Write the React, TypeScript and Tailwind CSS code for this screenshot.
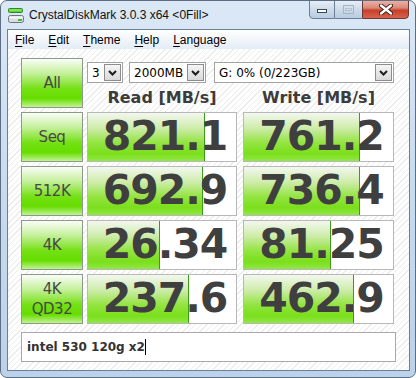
import React from 'react';

type Row = {
  label: string[];
  read: string;
  write: string;
  readBar: number;
  writeBar: number;
};

const ROWS: Row[] = [
  { label: ['Seq'], read: '821.1', write: '761.2', readBar: 117, writeBar: 116 },
  { label: ['512K'], read: '692.9', write: '736.4', readBar: 115, writeBar: 116 },
  { label: ['4K'], read: '26.34', write: '81.25', readBar: 72, writeBar: 87 },
  { label: ['4K', 'QD32'], read: '237.6', write: '462.9', readBar: 101, writeBar: 110 },
];

const MENU = ['File', 'Edit', 'Theme', 'Help', 'Language'];

const DriveIcon = () => (
  <svg width="17" height="17" viewBox="0 0 17 17">
    <rect x="0.5" y="1.5" width="14" height="4" rx="1" fill="#5fd03a" stroke="#2f8a1e" />
    <rect x="1.5" y="2.5" width="12" height="1" fill="#a8f08a" />
    <rect x="0.5" y="8.5" width="15" height="7" rx="2" fill="#d8dde2" stroke="#6d747c" />
    <rect x="1.5" y="9.5" width="13" height="2" fill="#f4f6f8" />
    <rect x="10" y="12" width="4" height="2" fill="#3fbf2a" />
  </svg>
);

const Chevron = () => (
  <svg width="9" height="6" viewBox="0 0 9 6">
    <path d="M1 1 L4.5 4.5 L8 1" fill="none" stroke="#1d1d1d" strokeWidth="2" />
  </svg>
);

const Select = ({ text, width }: { text: string; width: string }) => (
  <div className={`${width} h-[21px] flex items-center bg-white border border-[#a3a3a3] p-px`}>
    <span className="flex-1 pl-[3px] text-[12px] leading-none text-black font-['DejaVu_Sans',sans-serif] whitespace-nowrap">
      {text}
    </span>
    <div className="w-[17px] h-full flex items-center justify-center border border-[#8d8d8d] bg-gradient-to-b from-[#f5f5f5] to-[#d9d9d9]">
      <Chevron />
    </div>
  </div>
);

const GreenButton = ({ label, className }: { label: string[]; className: string }) => (
  <div
    className={`${className} w-[62px] flex flex-col items-center justify-center border border-[#8b9a8b] bg-[linear-gradient(to_bottom,#fbfdf8_0%,#c4f09a_30%,#74e014_62%,#66dd00_82%,#c2f294_100%)] text-[#474747] text-[15px] leading-[20px] font-['DejaVu_Sans',sans-serif] tracking-[-0.5px]`}
  >
    {label.map((l) => (
      <span key={l}>{l}</span>
    ))}
  </div>
);

const ValueBox = ({ value, bar, width }: { value: string; bar: number; width: string }) => (
  <div className={`${width} h-[50px] relative bg-white border border-[#b8b8b8]`}>
    <div
      className="absolute left-0 top-0 bottom-0 border-r border-[#3d9a1a] bg-[linear-gradient(to_bottom,#f3f7ef_0%,#cdeca9_32%,#93e440_62%,#7adf1c_85%,#92e746_100%)]"
      style={{ width: bar }}
    />
    <div className="relative h-full flex items-center justify-center pl-[6px] pb-[2px] text-[41px] leading-none font-bold tracking-[-1px] text-[#3f3f3f] font-['DejaVu_Sans',sans-serif]">
      {value}
    </div>
  </div>
);

export default function App() {
  return (
    <div className="w-[416px] h-[378px] flex flex-col overflow-hidden rounded-[7px] border border-[#5d6e84] bg-gradient-to-b from-[#dbe8f6] via-[#c8dbef] to-[#bcd2ea] font-['Liberation_Sans',sans-serif]">
      {/* Title bar */}
      <div className="h-[28px] flex justify-between">
        <div className="flex items-center pl-[7px] gap-[4px] self-center">
          <DriveIcon />
          <span className="text-[12px] text-[#111] whitespace-nowrap">CrystalDiskMark 3.0.3 x64 &lt;0Fill&gt;</span>
        </div>
        <div className="flex self-start -mt-px pr-[6px]">
          <div className="w-[26px] h-[19px] flex items-end justify-center pb-[5px] rounded-bl-[4px] border border-[#6d7f96] bg-gradient-to-b from-[#e6eef7] via-[#cddbea] to-[#b9cbe0]">
            <div className="w-[10px] h-[4px] bg-white border border-[#39475a]" />
          </div>
          <div className="w-[27px] h-[19px] flex items-center justify-center border-y border-[#6d7f96] bg-gradient-to-b from-[#e6eef7] via-[#cddbea] to-[#b9cbe0]">
            <div className="w-[11px] h-[9px] border border-[#a6b4c4] flex items-center justify-center">
              <div className="w-[7px] h-[3px] border border-[#b6c2d0]" />
            </div>
          </div>
          <div className="w-[47px] h-[19px] flex items-center justify-center rounded-br-[4px] border border-[#6b3a34] bg-[linear-gradient(to_bottom,#eab0a4_0%,#d98b78_40%,#c8402a_55%,#d6634d_100%)]">
            <svg width="14" height="11" viewBox="0 0 14 11">
              <path d="M2 1.5 L12 9.5 M12 1.5 L2 9.5" stroke="#3b1a16" strokeWidth="4.2" strokeLinecap="round" />
              <path d="M2 1.5 L12 9.5 M12 1.5 L2 9.5" stroke="#ffffff" strokeWidth="2.4" strokeLinecap="round" />
            </svg>
          </div>
        </div>
      </div>

      {/* Frame inner */}
      <div className="flex-1 ml-[6px] mr-[5px] mb-[6px] flex flex-col border border-[#6b7f99]">
        {/* Menu bar */}
        <div className="h-[19px] flex items-center gap-[14px] pl-[7px] bg-gradient-to-b from-[#ffffff] to-[#e4ecf6] text-[12px] text-black">
          {MENU.map((m) => (
            <span key={m}>
              <span className="underline underline-offset-[2px]">{m[0]}</span>
              {m.slice(1)}
            </span>
          ))}
        </div>

        {/* Client area */}
        <div className="flex-1 pl-[13px] pt-[9px] bg-[repeating-linear-gradient(135deg,#ffffff_0px,#ffffff_3px,#ececec_3px,#ececec_4px)]">
          <div className="flex gap-[4px]">
            <GreenButton label={['All']} className="h-[50px]" />
            <div className="flex flex-col">
              <div className="flex mt-[4px]">
                <Select text="3" width="w-[36px]" />
                <div className="w-[6px]" />
                <Select text="2000MB" width="w-[77px]" />
                <div className="w-[8px]" />
                <Select text="G: 0% (0/223GB)" width="w-[180px]" />
              </div>
              <div className="flex gap-[6px] mt-[4px] text-[16px] font-bold text-[#3c3c3c] font-['DejaVu_Sans',sans-serif] leading-[21px]">
                <div className="w-[150px] text-center">Read [MB/s]</div>
                <div className="w-[151px] text-center">Write [MB/s]</div>
              </div>
            </div>
          </div>

          <div className="flex flex-col gap-[4px] mt-[4px]">
            {ROWS.map((r) => (
              <div key={r.read} className="flex">
                <GreenButton label={r.label} className="h-[50px]" />
                <div className="w-[4px]" />
                <ValueBox value={r.read} bar={r.readBar} width="w-[150px]" />
                <div className="w-[6px]" />
                <ValueBox value={r.write} bar={r.writeBar} width="w-[151px]" />
              </div>
            ))}
          </div>

          <div className="mt-[8px] w-[375px] h-[30px] flex items-center pl-[5px] bg-white border border-[#a9a9a9] text-[12px] font-bold text-[#333] font-['DejaVu_Sans',sans-serif]">
            <span>intel 530 120g x2</span>
            <span className="w-px h-[16px] bg-black" />
          </div>
        </div>
      </div>
    </div>
  );
}
